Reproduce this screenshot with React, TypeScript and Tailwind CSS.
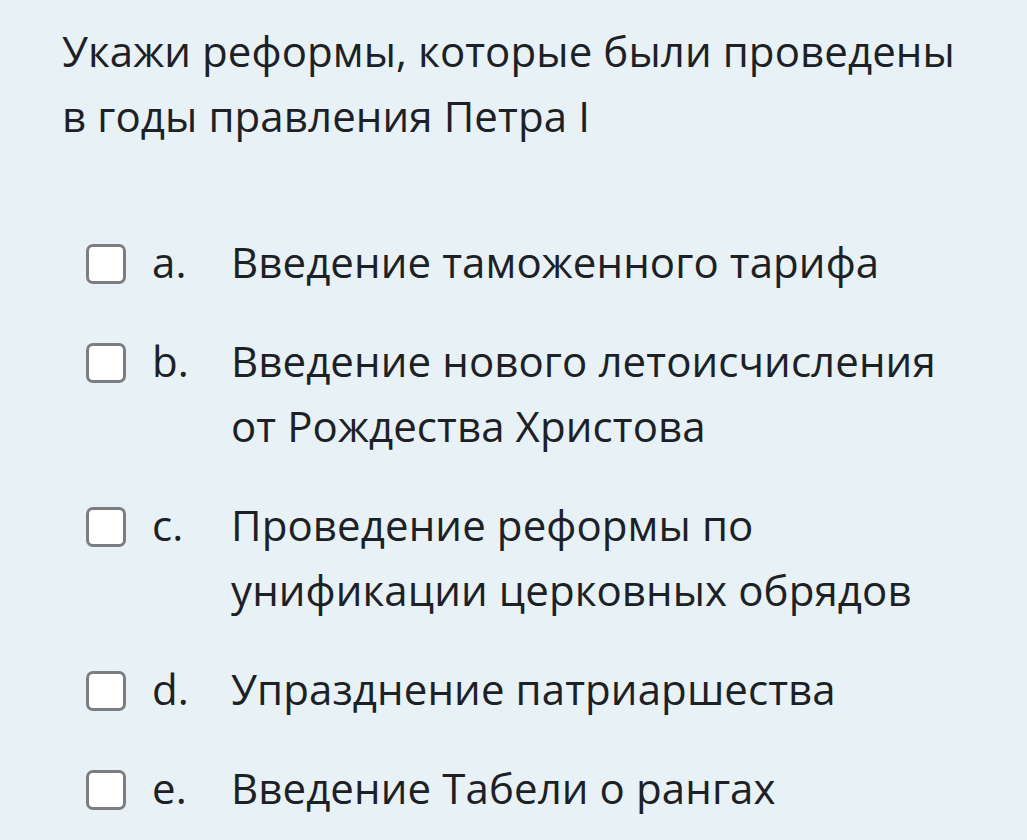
import React from 'react';

type Option = { letter: string; lines: string[] };

const OPTIONS: Option[] = [
  { letter: 'a.', lines: ['Введение таможенного тарифа'] },
  { letter: 'b.', lines: ['Введение нового летоисчисления', 'от Рождества Христова'] },
  { letter: 'c.', lines: ['Проведение реформы по', 'унификации церковных обрядов'] },
  { letter: 'd.', lines: ['Упразднение патриаршества'] },
  { letter: 'e.', lines: ['Введение Табели о рангах'] },
];

const OptionRow: React.FC<{ option: Option }> = ({ option }) => (
  <label className="flex items-start">
    {/* checkbox box */}
    <span className="mt-[15px] mr-[26px] h-[40px] w-[40px] shrink-0 rounded-[7px] border-[3px] border-[#7b7d80] bg-white" />
    <span className="w-[79px] shrink-0">{option.letter}</span>
    <span className="whitespace-nowrap">
      {option.lines.map((line, i) => (
        <span key={i} className="block">
          {line}
        </span>
      ))}
    </span>
  </label>
);

export default function App() {
  return (
    <div
      className="min-h-[840px] w-full bg-[#e7f1f6] text-[#1d2125] text-[42px] leading-[65px] tracking-[0.1px]"
      style={{ fontFamily: '"Open Sans", Lato, sans-serif' }}
    >
      <div className="pl-[62px] pt-[18px]">
        <h2 className="font-normal">
          Укажи реформы, которые были проведены
          <br />в годы правления Петра I
        </h2>

        <div className="mt-[81px] flex flex-col gap-[34px] pl-[24px]">
          {OPTIONS.map((o) => (
            <OptionRow key={o.letter} option={o} />
          ))}
        </div>
      </div>
    </div>
  );
}
